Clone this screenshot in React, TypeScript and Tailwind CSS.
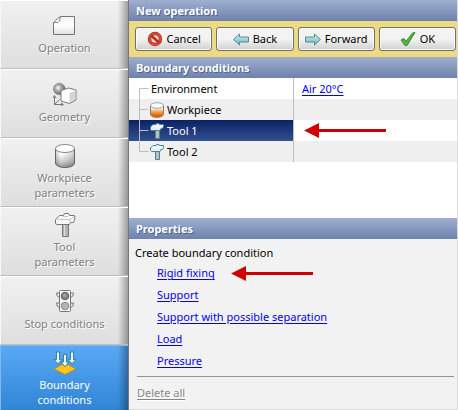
import type { ReactNode } from "react";
import clsx from "clsx";

function OperationIcon() {
  return (
    <svg width="24" height="24" viewBox="0 0 24 24">
      <defs>
        <linearGradient id="page" x1="0" y1="0" x2="0" y2="1">
          <stop offset="0" stopColor="#f4f4f4" />
          <stop offset="0.5" stopColor="#fff" />
          <stop offset="1" stopColor="#dedede" />
        </linearGradient>
      </defs>
      <path d="M7.500 3.500h14v18h-21v-12z" fill="url(#page)" stroke="#777" />
      <path d="M7.500 3.500l-1 4.500-1.500 1.500H.5z" fill="#fff" stroke="#888" />
    </svg>
  );
}

function GeometryIcon() {
  return (
    <svg width="24" height="24" viewBox="0 0 24 24">
      <defs>
        <radialGradient id="ball" cx="0.4" cy="0.4" r="0.6">
          <stop offset="0" stopColor="#fff" />
          <stop offset="0.45" stopColor="#a8a8a8" />
          <stop offset="1" stopColor="#6c6c6c" />
        </radialGradient>
      </defs>
      <circle cx="6.300" cy="7" r="5.800" fill="url(#ball)" stroke="#777" strokeWidth="0.6" />
      <path d="M8 8.500L15.500 6L23 8V18L16.500 21.500L8 19Z" fill="#fff" stroke="#777" />
      <path d="M16.500 11l6-2.500v9l-6 3z" fill="#d5d5d5" />
      <path d="M1.500 14.500v8h8M1.500 22.500l5-5" fill="none" stroke="#777" />
      <path d="M0 16l1.500-2.500 1.500 2.500M8 21l2.500 1.500-2.500 1.500" fill="none" stroke="#777" />
    </svg>
  );
}

function CylinderIcon() {
  return (
    <svg width="24" height="24" viewBox="0 0 24 24">
      <defs>
        <linearGradient id="steel" x1="0" y1="0" x2="0" y2="1">
          <stop offset="0.3" stopColor="#fff" />
          <stop offset="0.65" stopColor="#c4c4c4" />
          <stop offset="1" stopColor="#6a6a6a" />
        </linearGradient>
        <linearGradient id="steelSide">
          <stop offset="0" stopColor="#777" stopOpacity="0.4" />
          <stop offset="0.3" stopColor="#fff" stopOpacity="0.3" />
          <stop offset="1" stopColor="#777" stopOpacity="0.4" />
        </linearGradient>
      </defs>
      <path d="M2.500 4.500v14.500c0 6 19 6 19 0V4.500z" fill="url(#steel)" />
      <path d="M2.500 4.500v14.500c0 6 19 6 19 0V4.500z" fill="url(#steelSide)" stroke="#666" />
      <ellipse cx="12" cy="4.500" rx="9.500" ry="4" fill="#fff" stroke="#888" />
    </svg>
  );
}

function HammerIcon() {
  return (
    <svg width="24" height="24" viewBox="0 0 24 24">
      <path d="M9.500 9.500h6v14h-6z" fill="#b4b4b4" stroke="#777" />
      <path d="M11.500 11v12" stroke="#e0e0e0" />
      <path
        d="M6.500 2.500H10.500L11.500 .5H15.500L16.500 2.500H21.500L22 5L20.500 9.500H17.500L16.500 11.500H4L2.500 10.500V6.500Z"
        fill="#fafafa"
        stroke="#777"
      />
      <path d="M10 3.500h5M4 6.500H17L21 3.500M17 7V10.500" fill="none" stroke="#c4c4c4" />
    </svg>
  );
}

function TrafficIcon() {
  return (
    <svg width="24" height="24" viewBox="0 0 24 24">
      <path d="M6.500 4H3.500q0 4 3 4.500M6.500 14H3.500q0 4 3 4.500M17.500 4h3q0 4-3 4.500M17.500 14h3q0 4-3 4.500" fill="#eee" stroke="#777" />
      <rect x="6.500" y="1.500" width="11" height="21" rx="1" fill="#f6f6f6" stroke="#777" />
      <circle cx="12" cy="7" r="3.800" fill="#828282" stroke="#666" />
      <circle cx="11.500" cy="6.500" r="1.500" fill="#aaa" />
      <circle cx="12" cy="17" r="3.800" fill="#b4b4b4" stroke="#888" />
    </svg>
  );
}

function BoundaryIcon() {
  return (
    <svg width="24" height="24" viewBox="0 0 24 24">
      <path d="M12 12l11 6-11 5.500L1 18z" fill="#ffc41a" stroke="#b98312" strokeWidth="0.8" />
      <g fill="#e4fbfc" stroke="#32788d" strokeWidth="0.9">
        <path d="M3.500 1h3v7.500h2.300L5 13 1.200 8.500h2.300z" />
        <path d="M17.500 1h3v7.500h2.300L19 13l-3.800-4.500h2.300z" />
        <path d="M10.500 3.500h3V11h2.300L12 15.800 8.200 11h2.300z" />
      </g>
    </svg>
  );
}

function CancelIcon() {
  return (
    <svg width="16" height="16" viewBox="0 0 16 16">
      <circle cx="8" cy="8" r="5.500" fill="#f3dcd8" stroke="#a92a1c" strokeWidth="3.400" />
      <circle cx="8" cy="8" r="5.500" fill="none" stroke="#d94c3b" strokeWidth="2" />
      <path d="M4 4.500l8 7" stroke="#b93223" strokeWidth="2.800" />
    </svg>
  );
}

function ArrowIcon({ flip = false }: { flip?: boolean }) {
  return (
    <svg width="16" height="16" viewBox="0 0 16 16" className={clsx(flip && "-scale-x-100")}>
      <defs>
        <linearGradient id="teal" x1="0" y1="0" x2="0" y2="1">
          <stop offset="0" stopColor="#d8f3f3" />
          <stop offset="1" stopColor="#6bb3bc" />
        </linearGradient>
      </defs>
      <path d="M.5 6h9V3l6 5.500-6 5.500V11h-9z" fill="url(#teal)" stroke="#528b98" />
    </svg>
  );
}

function CheckIcon() {
  return (
    <svg width="16" height="16" viewBox="0 0 16 16">
      <path d="M1 9l3-1.500 2 3L12.500 2l2.500-.5L7 14.500H5z" fill="#55b63e" stroke="#368927" />
    </svg>
  );
}

function WorkpieceIcon() {
  return (
    <svg width="14" height="16" viewBox="0 0 14 16">
      <defs>
        <linearGradient id="hot" x1="0" y1="0" x2="0" y2="1">
          <stop offset="0.2" stopColor="#fff" />
          <stop offset="0.5" stopColor="#f7a860" />
          <stop offset="0.85" stopColor="#df6300" />
        </linearGradient>
      </defs>
      <path d="M.5 3.500v8.500c0 4.500 13 4.500 13 0V3.500z" fill="url(#hot)" stroke="#9a7661" />
      <ellipse cx="7" cy="3.500" rx="6.500" ry="2.800" fill="#f8fcfd" stroke="#8aa7b0" />
    </svg>
  );
}

function ToolIcon() {
  return (
    <svg width="14" height="16" viewBox="0 0 14 16">
      <path d="M5.500 6.500h4v9h-4z" fill="#b5c0c4" stroke="#567e8b" />
      <path
        d="M3 1.500H6L6.500 .5H9L9.500 1.500H13.500V3.500L12.500 5.500H11L10 7.500H1.500L.5 6.500V4Z"
        fill="#e5f2f5"
        stroke="#4c8395"
      />
      <path d="M2 3.500h8l3-1" fill="none" stroke="#fff" />
    </svg>
  );
}

function RedArrow() {
  return (
    <svg width="82" height="15" viewBox="0 0 82 15" aria-hidden="true">
      <path d="M0 7.500L15 0v6h67v3H15v6z" fill="#d00000" />
    </svg>
  );
}

function SectionTitle({ children }: { children: ReactNode }) {
  return (
    <h2 className="flex h-[21px] items-center bg-linear-to-b from-[#9fafcf] to-[#6f82ad] pl-[7px] text-[11px] font-bold text-white [text-shadow:1px_1px_0_#50648f]">
      {children}
    </h2>
  );
}

const steps = [
  { label: ["Operation"], icon: <OperationIcon /> },
  { label: ["Geometry"], icon: <GeometryIcon /> },
  { label: ["Workpiece", "parameters"], icon: <CylinderIcon /> },
  { label: ["Tool", "parameters"], icon: <HammerIcon /> },
  { label: ["Stop conditions"], icon: <TrafficIcon /> },
  { label: ["Boundary", "conditions"], icon: <BoundaryIcon />, active: true },
];

const actions = [
  { label: "Cancel", icon: <CancelIcon /> },
  { label: "Back", icon: <ArrowIcon flip /> },
  { label: "Forward", icon: <ArrowIcon /> },
  { label: "OK", icon: <CheckIcon /> },
];

const rows = [
  { name: "Environment", line: "M.5 21V10.500h9", value: "Air 20°C" },
  { name: "Workpiece", line: "M.5 0v21M.5 10.500h9", icon: <WorkpieceIcon /> },
  { name: "Tool 1", line: "M.5 0v21M.5 10.500h9", icon: <ToolIcon />, selected: true },
  { name: "Tool 2", line: "M.5 0v10.500h9", icon: <ToolIcon /> },
];

const conditions = ["Rigid fixing", "Support", "Support with possible separation", "Load", "Pressure"];

function Sidebar() {
  return (
    <nav className="flex w-[129px] shrink-0 flex-col border-r border-[#777]">
      {steps.map((step) => (
        <button
          key={step.label.join(" ")}
          type="button"
          className={clsx(
            "flex flex-col items-center border-l text-[11px] leading-[15px]",
            step.label.length > 1 ? "gap-0.5 pt-[5px]" : "gap-[3px] pt-3",
            step.active
              ? "min-h-[65px] grow border-t border-[#7dbaf2] bg-[linear-gradient(to_right,transparent_92%,#00000055),linear-gradient(#58a9f5,#3085d6)] text-white"
              : "h-[69px] border-t border-b border-t-white border-b-[#bdbdbd] border-l-[#f8f8f8] bg-[linear-gradient(to_right,transparent_92%,#00000055),linear-gradient(#f1f1f1,#dedede)] text-[#828282] [text-shadow:1px_1px_0_#fff]",
          )}
        >
          {step.icon}
          <span>
            {step.label.map((line) => (
              <span key={line} className="block">
                {line}
              </span>
            ))}
          </span>
        </button>
      ))}
    </nav>
  );
}

function ConditionTree() {
  return (
    <table className="w-full table-fixed border-collapse text-left">
      <tbody>
        {rows.map((row) => (
          <tr key={row.name} className={clsx("h-[21px]", !row.selected && "even:bg-[#efefef]")}>
            <td
              className={clsx(
                "p-0",
                row.selected && "bg-linear-to-b from-[#0b2266] to-[#34508e] text-white",
              )}
            >
              <div className="flex h-[21px] items-center pl-2.5">
                <svg width="10" height="21" viewBox="0 0 10 21" className="shrink-0">
                  <path d={row.line} fill="none" stroke="#bdbdbd" />
                </svg>
                {row.icon && <span className="ml-px">{row.icon}</span>}
                <span className={row.icon ? "ml-[3px]" : "ml-0.5"}>{row.name}</span>
              </div>
            </td>
            <td className="p-0">
              <div className="flex h-[21px] items-center border-l border-[#bdbdbd] pl-2">
                {row.value && (
                  <a href="#environment" className="text-[#0000f0] underline underline-offset-2">
                    {row.value}
                  </a>
                )}
                {row.selected && <span className="ml-0.5"><RedArrow /></span>}
              </div>
            </td>
          </tr>
        ))}
      </tbody>
    </table>
  );
}

export default function App() {
  return (
    <div className="flex min-h-screen bg-white font-['Segoe_UI','Noto_Sans',sans-serif] text-[11px] leading-4 text-black">
      <Sidebar />
      <main className="flex min-w-0 grow flex-col border-r border-b border-[#dcdcdc]">
        <SectionTitle>New operation</SectionTitle>
        <div className="grid h-9 grid-cols-4 items-center gap-1 bg-[#ecdb83] pr-px pl-1.5">
          {actions.map((action) => (
            <button
              key={action.label}
              type="button"
              className="flex h-6 items-center justify-center gap-1 rounded-[3px] border border-[#707070] bg-linear-to-b from-[#f3f3f3] from-50% to-[#d0d0d0] inset-ring inset-ring-white/80"
            >
              {action.icon}
              {action.label}
            </button>
          ))}
        </div>
        <SectionTitle>Boundary conditions</SectionTitle>
        <div className="min-h-[140px]">
          <ConditionTree />
        </div>
        <SectionTitle>Properties</SectionTitle>
        <section className="grow bg-[#f2f2f2] pt-1.5 pr-[3px] pl-1.5">
          <p>Create boundary condition</p>
          <ul className="mt-px">
            {conditions.map((name, i) => (
              <li key={name} className="flex h-[22px] items-center gap-4 pl-[22px]">
                <a href="#condition" className="text-[#0000f0] underline underline-offset-2">
                  {name}
                </a>
                {i === 0 && <RedArrow />}
              </li>
            ))}
          </ul>
          <hr className="mt-1 ml-0.5 border-[#929292]" />
          <button type="button" className="mt-2 ml-0.5 text-[#858585] underline underline-offset-2 [text-shadow:1px_1px_0_#fff]">
            Delete all
          </button>
        </section>
      </main>
    </div>
  );
}
